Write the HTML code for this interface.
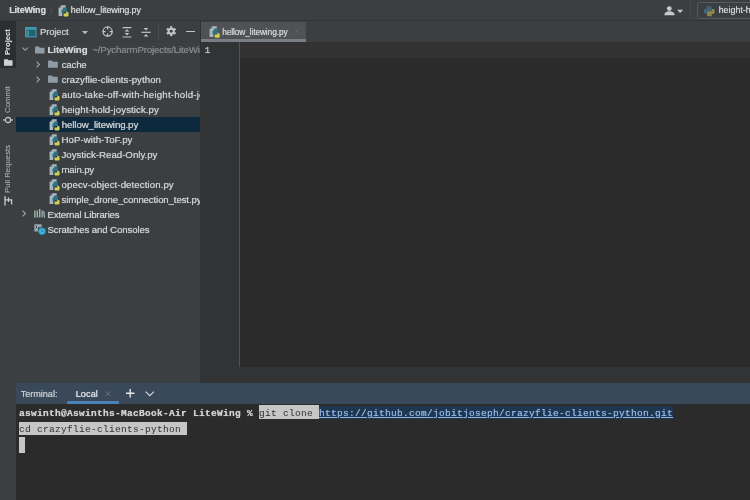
<!DOCTYPE html>
<html><head><meta charset="utf-8">
<style>
*{margin:0;padding:0;box-sizing:border-box}
html,body{width:750px;height:500px;overflow:hidden;background:#2b2b2b}
body{position:relative;font-family:"Liberation Sans",sans-serif;font-size:10px;color:#bbbbbb}
.abs{position:absolute}
.t{position:absolute;white-space:nowrap;line-height:14px;text-shadow:0 0 .7px currentColor}
svg{position:absolute;overflow:visible}
.t,.vt,svg{filter:blur(.35px)}
#nav{left:0;top:0;width:750px;height:20px;background:#3c3f41}
#navb{left:0;top:20px;width:750px;height:1px;background:#343739}
#strip{left:0;top:21px;width:16px;height:479px;background:#3c3f41}
#stripb{display:none}
#ptab{left:0;top:21px;width:16px;height:47px;background:#2c2e2f}
#proj{left:16px;top:21px;width:184px;height:362px;background:#3c3f41;overflow:hidden}
#projhb{left:0;top:20px;width:184px;height:1px;background:#393c3e}
#projb{left:200px;top:21px;width:1px;height:362px;background:#2f3133}
#sel{left:0;top:95.6px;width:184px;height:15.2px;background:#0d293e}
#tabs{left:201px;top:21px;width:549px;height:20.6px;background:#3c3f41}
#tab{left:201px;top:22px;width:104.6px;height:19.7px;background:#4e5254}
#tabu{left:201px;top:39.2px;width:104.6px;height:2.5px;background:#787e84}
#gut{left:201px;top:41.6px;width:38px;height:341.4px;background:#313335}
#gutl{left:238.5px;top:41.6px;width:1px;height:325px;background:#505355}
#ed{left:239px;top:41.6px;width:511px;height:324.9px;background:#2b2b2b}
#caret{left:239.5px;top:41.6px;width:510.5px;height:16.2px;background:#323232}
#edbot{left:201px;top:366.5px;width:549px;height:16.5px;background:#313335}
#th{left:16px;top:383px;width:734px;height:21px;background:#3a4959}
#tb{left:16px;top:404px;width:734px;height:96px;background:#2b2b2b}
.mono{font-family:"Liberation Mono",monospace;font-size:9.5px;letter-spacing:.3px;color:#cfcfcf;line-height:14px;white-space:pre}
.hl{background:#c6c6c6;color:#303030}
.vt{position:absolute;transform-origin:0 0;transform:rotate(-90deg);white-space:nowrap;font-size:7.8px;line-height:10px;height:10px}
</style></head><body>
<div id="nav" class="abs"></div><div id="navb" class="abs"></div>
<div id="strip" class="abs"></div><div id="stripb" class="abs"></div><div id="ptab" class="abs"></div>
<div id="tabs" class="abs"></div><div id="tab" class="abs"></div><div id="tabu" class="abs"></div>
<div id="gut" class="abs"></div><div id="ed" class="abs"></div><div id="caret" class="abs"></div><div id="gutl" class="abs"></div>
<div id="edbot" class="abs"></div>
<div id="th" class="abs"></div><div id="tb" class="abs"></div>


<!-- nav icons -->
<svg style="left:48.8px;top:6px" width="4" height="10" viewBox="0 0 4 10"><path d="M0.5 0.3L3 5L0.5 9.7" fill="none" stroke="#4d5053" stroke-width="1"/></svg>
<svg style="left:58px;top:5.2px" width="11" height="12" viewBox="0 0 11.5 12.5"><path d="M3.4 0.3H8V4.6H4.4V11.4H0.6V3.1Z" fill="#a9b7be"/> <path d="M0.6 3.1L3.4 0.3V3.1Z" fill="#3c3f41" fill-opacity=".4"/> <path d="M5.2 2.6H8.2Q9.2 2.6 9.2 3.6V6.4Q9.2 7.4 8.2 7.4H5.8V8.6H4.6Q3.6 8.6 3.6 7.6V5.6Q3.6 4.6 4.6 4.6H5.2Z" fill="#2b7384"/> <path d="M7.6 12H10Q11 12 11 11V8.4Q11 7.4 10 7.4H9.4V6.6H8.8V7.8Q8.8 8.8 7.8 8.8H5.8V11Q5.8 12 6.8 12Z" fill="#cdd15a"/></svg>
<!-- user icon -->
<svg style="left:664px;top:5.5px" width="20" height="10" viewBox="0 0 20 10">
 <circle cx="5.3" cy="2.6" r="2.4" fill="#c6c8ca"/>
 <path d="M0.4 9.2C0.4 6.4 2.5 5.3 5.3 5.3S10.6 6.4 10.6 9.2Z" fill="#c6c8ca"/>
 <path d="M13 3.8H19.2L16.1 7Z" fill="#c6c8ca"/>
</svg>
<div class="abs" style="left:689.5px;top:1px;width:1px;height:18px;background:#474a4c"></div>
<div class="abs" style="left:696.5px;top:2.2px;width:70px;height:16.6px;border:1px solid #575b5d;border-radius:2.5px"></div>
<svg style="left:704px;top:6px" width="10.5" height="10.5" viewBox="0 0 10 10">
 <path d="M2.6 0.2H6.2Q7.2 0.2 7.2 1.2V4.9H3.6Q2.6 4.9 2.6 5.9V7.2H1Q0 7.2 0 6.2V3.5Q0 2.5 1 2.5H2.6Z" fill="#3e647a"/>
 <path d="M7.4 9.8H3.8Q2.8 9.8 2.8 8.8V5.1H6.4Q7.4 5.1 7.4 4.1V2.8H9Q10 2.8 10 3.8V6.5Q10 7.5 9 7.5H7.4Z" fill="#8a8648"/>
</svg>

<!-- tool strip -->
<div class="vt" style="left:2.6px;top:55px;font-weight:bold;color:#e4e6e8;font-size:7.6px">Project</div>
<svg style="left:3.6px;top:58.8px" width="8.6" height="6.8" viewBox="0 0 10 8"><path d="M0 0.2H4.2L5.2 1.6H10V8H0Z" fill="#cfd1d3"/></svg>
<div class="vt" style="left:2.8px;top:112.6px;color:#b8babc">Commit</div>
<svg style="left:3px;top:116px" width="10" height="8" viewBox="0 0 10 8"><path d="M0 4H10" stroke="#c6c8ca" stroke-width="1.2"/><circle cx="5" cy="4" r="2.6" fill="#3c3f41" stroke="#c6c8ca" stroke-width="1.2"/></svg>
<div class="vt" style="left:2.8px;top:193.2px;color:#b8babc">Pull Requests</div>
<svg style="left:4px;top:196px" width="9" height="9.4" viewBox="0 0 9 9.4"><path d="M1 0V9.4M1 3.9H7.6V8.6M4.5 1.6V6" fill="none" stroke="#c8cacc" stroke-width="1.3"/></svg>

<!-- project panel -->
<div id="proj" class="abs">
 <div id="projhb" class="abs"></div>
 <div id="sel" class="abs"></div>
<div class="abs" style="left:1px;top:0;width:183px;height:362px">
 <!-- header icons (coords relative to panel: x-17, y-21) -->
 <svg style="left:8px;top:5.6px" width="11.6" height="10.4" viewBox="0 0 11.6 10.4">
  <rect x="0.6" y="0.6" width="10.4" height="9.2" fill="#27606f" stroke="#3d9ab0" stroke-width="1.2"/>
  <rect x="0.6" y="0.6" width="10.4" height="2.2" fill="#3d9ab0"/>
  <rect x="1.4" y="3.4" width="2.6" height="5.8" fill="#3d8da2"/>
 </svg>
 <svg style="left:65px;top:10px" width="6" height="3.2" viewBox="0 0 6 3.2"><path d="M0 0H6L3 3.2Z" fill="#b8babc"/></svg>
 <svg style="left:84.6px;top:5.4px" width="11.2" height="11.2" viewBox="0 0 11.2 11.2"><circle cx="5.6" cy="5.6" r="4.6" fill="none" stroke="#c2c4c6" stroke-width="1.25"/><path d="M5.6 0.6V3.6M5.6 7.6V10.6M0.6 5.6H3.6M7.6 5.6H10.6" stroke="#c2c4c6" stroke-width="1.25"/></svg>
 <svg style="left:105px;top:5.6px" width="10" height="10.6" viewBox="0 0 10 10.6"><path d="M0.6 0.6H9.4M0.6 10H9.4" stroke="#c2c4c6" stroke-width="1.2"/><path d="M5 2.2L7.4 4.6H2.6ZM5 8.4L7.4 6H2.6Z" fill="#c2c4c6"/></svg>
 <svg style="left:124.4px;top:5.6px" width="10" height="10.6" viewBox="0 0 10 10.6"><path d="M0.4 5.3H9.6" stroke="#c2c4c6" stroke-width="1.2"/><path d="M5 3.6L7.4 1.0H2.6ZM5 7L7.4 9.6H2.6Z" fill="#c2c4c6"/></svg>
 <div class="abs" style="left:141.4px;top:4px;width:1px;height:13.5px;background:#4d5052"></div>
 <svg style="left:149px;top:5.4px" width="10.4" height="10.4" viewBox="-5.2 -5.2 10.4 10.4">
  <g fill="#c2c4c6"><circle r="3.5"/>
  <rect x="-1.1" y="-5" width="2.2" height="10"/>
  <rect x="-1.1" y="-5" width="2.2" height="10" transform="rotate(60)"/>
  <rect x="-1.1" y="-5" width="2.2" height="10" transform="rotate(120)"/></g>
  <circle r="1.5" fill="#3c3f41"/>
 </svg>
 <div class="abs" style="left:169.2px;top:9.6px;width:9.2px;height:1.5px;background:#c2c4c6"></div>
 <!-- tree icons -->
 <svg style="left:4.6px;top:26.4px" width="6.4" height="4" viewBox="0 0 6.4 4"><path d="M0.5 0.6L3.2 3.3L5.9 0.6" fill="none" stroke="#a4a7a9" stroke-width="1.1"/></svg>
 <svg style="left:18px;top:24.6px" width="9.6" height="7.6" viewBox="0 0 10 8"><path d="M0 0.4H4L5 1.8H10V8H0Z" fill="#8f9ca6"/></svg>
 <svg style="left:18.8px;top:39.7px" width="4" height="7" viewBox="0 0 4 7"><path d="M0.6 0.6L3.4 3.5L0.6 6.4" fill="none" stroke="#a4a7a9" stroke-width="1.1"/></svg>
 <svg style="left:31.2px;top:39.3px" width="9.8" height="7.8" viewBox="0 0 10 8"><path d="M0 0.4H4L5 1.8H10V8H0Z" fill="#8f9ca6"/></svg>
 <svg style="left:18.8px;top:54.6px" width="4" height="7" viewBox="0 0 4 7"><path d="M0.6 0.6L3.4 3.5L0.6 6.4" fill="none" stroke="#a4a7a9" stroke-width="1.1"/></svg>
 <svg style="left:31.2px;top:54.2px" width="9.8" height="7.8" viewBox="0 0 10 8"><path d="M0 0.4H4L5 1.8H10V8H0Z" fill="#8f9ca6"/></svg>
 <svg style="left:31.8px;top:67.8px" width="11" height="12" viewBox="0 0 11.5 12.5"><path d="M3.4 0.3H8V4.6H4.4V11.4H0.6V3.1Z" fill="#a9b7be"/> <path d="M0.6 3.1L3.4 0.3V3.1Z" fill="#3c3f41" fill-opacity=".4"/> <path d="M5.2 2.6H8.2Q9.2 2.6 9.2 3.6V6.4Q9.2 7.4 8.2 7.4H5.8V8.6H4.6Q3.6 8.6 3.6 7.6V5.6Q3.6 4.6 4.6 4.6H5.2Z" fill="#2b7384"/> <path d="M7.6 12H10Q11 12 11 11V8.4Q11 7.4 10 7.4H9.4V6.6H8.8V7.8Q8.8 8.8 7.8 8.8H5.8V11Q5.8 12 6.8 12Z" fill="#cdd15a"/></svg>
 <svg style="left:31.8px;top:82.75px" width="11" height="12" viewBox="0 0 11.5 12.5"><path d="M3.4 0.3H8V4.6H4.4V11.4H0.6V3.1Z" fill="#a9b7be"/> <path d="M0.6 3.1L3.4 0.3V3.1Z" fill="#3c3f41" fill-opacity=".4"/> <path d="M5.2 2.6H8.2Q9.2 2.6 9.2 3.6V6.4Q9.2 7.4 8.2 7.4H5.8V8.6H4.6Q3.6 8.6 3.6 7.6V5.6Q3.6 4.6 4.6 4.6H5.2Z" fill="#2b7384"/> <path d="M7.6 12H10Q11 12 11 11V8.4Q11 7.4 10 7.4H9.4V6.6H8.8V7.8Q8.8 8.8 7.8 8.8H5.8V11Q5.8 12 6.8 12Z" fill="#cdd15a"/></svg>
 <svg style="left:31.8px;top:97.7px" width="11" height="12" viewBox="0 0 11.5 12.5"><path d="M3.4 0.3H8V4.6H4.4V11.4H0.6V3.1Z" fill="#a9b7be"/> <path d="M0.6 3.1L3.4 0.3V3.1Z" fill="#3c3f41" fill-opacity=".4"/> <path d="M5.2 2.6H8.2Q9.2 2.6 9.2 3.6V6.4Q9.2 7.4 8.2 7.4H5.8V8.6H4.6Q3.6 8.6 3.6 7.6V5.6Q3.6 4.6 4.6 4.6H5.2Z" fill="#2b7384"/> <path d="M7.6 12H10Q11 12 11 11V8.4Q11 7.4 10 7.4H9.4V6.6H8.8V7.8Q8.8 8.8 7.8 8.8H5.8V11Q5.8 12 6.8 12Z" fill="#cdd15a"/></svg>
 <svg style="left:31.8px;top:112.65px" width="11" height="12" viewBox="0 0 11.5 12.5"><path d="M3.4 0.3H8V4.6H4.4V11.4H0.6V3.1Z" fill="#a9b7be"/> <path d="M0.6 3.1L3.4 0.3V3.1Z" fill="#3c3f41" fill-opacity=".4"/> <path d="M5.2 2.6H8.2Q9.2 2.6 9.2 3.6V6.4Q9.2 7.4 8.2 7.4H5.8V8.6H4.6Q3.6 8.6 3.6 7.6V5.6Q3.6 4.6 4.6 4.6H5.2Z" fill="#2b7384"/> <path d="M7.6 12H10Q11 12 11 11V8.4Q11 7.4 10 7.4H9.4V6.6H8.8V7.8Q8.8 8.8 7.8 8.8H5.8V11Q5.8 12 6.8 12Z" fill="#cdd15a"/></svg>
 <svg style="left:31.8px;top:127.6px" width="11" height="12" viewBox="0 0 11.5 12.5"><path d="M3.4 0.3H8V4.6H4.4V11.4H0.6V3.1Z" fill="#a9b7be"/> <path d="M0.6 3.1L3.4 0.3V3.1Z" fill="#3c3f41" fill-opacity=".4"/> <path d="M5.2 2.6H8.2Q9.2 2.6 9.2 3.6V6.4Q9.2 7.4 8.2 7.4H5.8V8.6H4.6Q3.6 8.6 3.6 7.6V5.6Q3.6 4.6 4.6 4.6H5.2Z" fill="#2b7384"/> <path d="M7.6 12H10Q11 12 11 11V8.4Q11 7.4 10 7.4H9.4V6.6H8.8V7.8Q8.8 8.8 7.8 8.8H5.8V11Q5.8 12 6.8 12Z" fill="#cdd15a"/></svg>
 <svg style="left:31.8px;top:142.55px" width="11" height="12" viewBox="0 0 11.5 12.5"><path d="M3.4 0.3H8V4.6H4.4V11.4H0.6V3.1Z" fill="#a9b7be"/> <path d="M0.6 3.1L3.4 0.3V3.1Z" fill="#3c3f41" fill-opacity=".4"/> <path d="M5.2 2.6H8.2Q9.2 2.6 9.2 3.6V6.4Q9.2 7.4 8.2 7.4H5.8V8.6H4.6Q3.6 8.6 3.6 7.6V5.6Q3.6 4.6 4.6 4.6H5.2Z" fill="#2b7384"/> <path d="M7.6 12H10Q11 12 11 11V8.4Q11 7.4 10 7.4H9.4V6.6H8.8V7.8Q8.8 8.8 7.8 8.8H5.8V11Q5.8 12 6.8 12Z" fill="#cdd15a"/></svg>
 <svg style="left:31.8px;top:157.5px" width="11" height="12" viewBox="0 0 11.5 12.5"><path d="M3.4 0.3H8V4.6H4.4V11.4H0.6V3.1Z" fill="#a9b7be"/> <path d="M0.6 3.1L3.4 0.3V3.1Z" fill="#3c3f41" fill-opacity=".4"/> <path d="M5.2 2.6H8.2Q9.2 2.6 9.2 3.6V6.4Q9.2 7.4 8.2 7.4H5.8V8.6H4.6Q3.6 8.6 3.6 7.6V5.6Q3.6 4.6 4.6 4.6H5.2Z" fill="#2b7384"/> <path d="M7.6 12H10Q11 12 11 11V8.4Q11 7.4 10 7.4H9.4V6.6H8.8V7.8Q8.8 8.8 7.8 8.8H5.8V11Q5.8 12 6.8 12Z" fill="#cdd15a"/></svg>
 <svg style="left:31.8px;top:172.45px" width="11" height="12" viewBox="0 0 11.5 12.5"><path d="M3.4 0.3H8V4.6H4.4V11.4H0.6V3.1Z" fill="#a9b7be"/> <path d="M0.6 3.1L3.4 0.3V3.1Z" fill="#3c3f41" fill-opacity=".4"/> <path d="M5.2 2.6H8.2Q9.2 2.6 9.2 3.6V6.4Q9.2 7.4 8.2 7.4H5.8V8.6H4.6Q3.6 8.6 3.6 7.6V5.6Q3.6 4.6 4.6 4.6H5.2Z" fill="#2b7384"/> <path d="M7.6 12H10Q11 12 11 11V8.4Q11 7.4 10 7.4H9.4V6.6H8.8V7.8Q8.8 8.8 7.8 8.8H5.8V11Q5.8 12 6.8 12Z" fill="#cdd15a"/></svg>
 <svg style="left:5.4px;top:189.4px" width="4" height="7" viewBox="0 0 4 7"><path d="M0.6 0.6L3.4 3.5L0.6 6.4" fill="none" stroke="#a4a7a9" stroke-width="1.1"/></svg>
 <svg style="left:17px;top:188px" width="11.2" height="8.6" viewBox="0 0 11.2 8.6"><path d="M0.9 1.6V8.6M3.3 1.6V8.6M5.7 0.1V8.6" stroke="#94bda9" stroke-width="1.4" fill="none"/><path d="M8.1 1.6V8.6M9.7 2L10.5 8.6" stroke="#9aabb5" stroke-width="1.35" fill="none"/></svg>
 <svg style="left:17.2px;top:203px" width="12.4" height="11.4" viewBox="0 0 12.4 11.4">
  <path d="M0.3 0.3H7.6V3.2H4V7.4H0.3Z" fill="#9aa7b0"/>
  <path d="M1.6 1.6L3 3L1.6 4.4" stroke="#3c3f41" stroke-width=".9" fill="none"/>
  <circle cx="8" cy="7.3" r="3.5" fill="#43b4e0" stroke="#22809f" stroke-width="1"/>
  <path d="M8 5.6V7.5H9.3" stroke="#22708c" stroke-width=".9" fill="none"/>
 </svg>
<div class="t" style="left:30.5px;top:22.4px;font-size:9.7px;font-weight:bold;letter-spacing:-0.102px;color:#d0d2d4;">LiteWing</div>
<div class="t" style="left:75.3px;top:22.4px;font-size:9.7px;letter-spacing:-0.157px;color:#84878a;">~/PycharmProjects/LiteWing</div>
<div class="t" style="left:44.7px;top:37.3px;font-size:9.7px;letter-spacing:-0.212px;color:#cccfd1;">cache</div>
<div class="t" style="left:44.7px;top:52.2px;font-size:9.7px;letter-spacing:0.032px;color:#cccfd1;">crazyflie-clients-python</div>
<div class="t" style="left:44.7px;top:67.2px;font-size:9.7px;letter-spacing:0.193px;color:#cccfd1;">auto-take-off-with-height-hold-joystick.py</div>
<div class="t" style="left:44.7px;top:82.2px;font-size:9.7px;letter-spacing:0.063px;color:#cccfd1;">height-hold-joystick.py</div>
<div class="t" style="left:44.7px;top:97.1px;font-size:9.7px;letter-spacing:-0.089px;color:#cccfd1;">hellow_litewing.py</div>
<div class="t" style="left:44.5px;top:112.0px;font-size:9.7px;letter-spacing:0.031px;color:#cccfd1;">HoP-with-ToF.py</div>
<div class="t" style="left:44.5px;top:127.0px;font-size:9.7px;letter-spacing:-0.014px;color:#cccfd1;">Joystick-Read-Only.py</div>
<div class="t" style="left:44.5px;top:141.9px;font-size:9.7px;letter-spacing:-0.203px;color:#cccfd1;">main.py</div>
<div class="t" style="left:44.5px;top:156.9px;font-size:9.7px;letter-spacing:0.076px;color:#cccfd1;">opecv-object-detection.py</div>
<div class="t" style="left:44.5px;top:171.8px;font-size:9.7px;letter-spacing:-0.143px;color:#cccfd1;">simple_drone_connection_test.py</div>
<div class="t" style="left:30.4px;top:186.8px;font-size:9.7px;letter-spacing:-0.183px;color:#cccfd1;">External Libraries</div>
<div class="t" style="left:30.4px;top:201.8px;font-size:9.7px;letter-spacing:-0.137px;color:#cccfd1;">Scratches and Consoles</div>
</div></div>
<div id="projb" class="abs"></div>

<!-- editor tab -->
<svg style="left:208.6px;top:26.2px" width="11.2" height="12.2" viewBox="0 0 11.5 12.5"><path d="M3.4 0.3H8V4.6H4.4V11.4H0.6V3.1Z" fill="#a9b7be"/> <path d="M0.6 3.1L3.4 0.3V3.1Z" fill="#3c3f41" fill-opacity=".4"/> <path d="M5.2 2.6H8.2Q9.2 2.6 9.2 3.6V6.4Q9.2 7.4 8.2 7.4H5.8V8.6H4.6Q3.6 8.6 3.6 7.6V5.6Q3.6 4.6 4.6 4.6H5.2Z" fill="#2b7384"/> <path d="M7.6 12H10Q11 12 11 11V8.4Q11 7.4 10 7.4H9.4V6.6H8.8V7.8Q8.8 8.8 7.8 8.8H5.8V11Q5.8 12 6.8 12Z" fill="#cdd15a"/></svg>
<svg style="left:294px;top:28.4px" width="5.8" height="5.8" viewBox="0 0 6 6"><path d="M0.4 0.4L5.6 5.6M5.6 0.4L0.4 5.6" stroke="#606467" stroke-width=".9"/></svg>
<div class="t" style="left:204.8px;top:43.7px;font-family:'Liberation Mono',monospace;font-size:9px;color:#c2c4c6">1</div>

<!-- terminal header -->
<svg style="left:105.2px;top:391px" width="5.6" height="5.6" viewBox="0 0 6 6"><path d="M0.4 0.4L5.6 5.6M5.6 0.4L0.4 5.6" stroke="#67788a" stroke-width="1"/></svg>
<div class="abs" style="left:67.2px;top:401.2px;width:52px;height:3px;background:#4882b8;border-radius:1px"></div>
<svg style="left:126.4px;top:389.4px" width="8.4" height="8.4" viewBox="0 0 8.4 8.4"><path d="M4.2 0V8.4M0 4.2H8.4" stroke="#e4e6e8" stroke-width="1.4"/></svg>
<svg style="left:145.4px;top:391.4px" width="9.6" height="5.4" viewBox="0 0 9.6 5.4"><path d="M0.6 0.6L4.8 4.6L9 0.6" fill="none" stroke="#d0d4d8" stroke-width="1.2"/></svg>

<!-- terminal body -->
<div class="abs hl" style="left:258.6px;top:405px;width:60px;height:14px"></div>
<div class="abs" style="left:318.6px;top:406px;width:354px;height:12.6px;background:#1f364f"></div>
<div class="abs hl" style="left:18.6px;top:421.6px;width:168.6px;height:13.8px"></div>
<div class="abs hl" style="left:18.6px;top:437.3px;width:6.4px;height:16px"></div>
<div class="t mono" style="left:19px;top:406.9px"><b>aswinth@Aswinths-MacBook-Air LiteWing % </b><span style="color:#303030;text-shadow:none">git clone </span><span style="color:#8db3e2;text-decoration:underline">https://github.com/jobitjoseph/crazyflie-clients-python.git</span></div>
<div class="t mono" style="left:19px;top:422.5px;color:#303030;text-shadow:none">cd crazyflie-clients-python </div>
<div class="t" style="left:9.2px;top:2.9px;font-size:9px;font-weight:bold;letter-spacing:-0.165px;color:#d2d4d6;">LiteWing</div>
<div class="t" style="left:70.8px;top:2.9px;font-size:9px;letter-spacing:-0.141px;color:#d2d4d6;">hellow_litewing.py</div>
<div class="t" style="left:718.7px;top:3.0px;font-size:8.9px;color:#d2d4d6;">height-hold</div>
<div class="t" style="left:40.0px;top:25.0px;font-size:9.3px;letter-spacing:-0.048px;color:#c9cbcd;">Project</div>
<div class="t" style="left:222.2px;top:24.5px;font-size:8.4px;letter-spacing:-0.123px;color:#d0d2d4;">hellow_litewing.py</div>
<div class="t" style="left:20.7px;top:386.5px;font-size:9.2px;letter-spacing:-0.065px;color:#c2c8ce;">Terminal:</div>
<div class="t" style="left:75.7px;top:386.5px;font-size:9.2px;letter-spacing:0.046px;color:#dde1e5;">Local</div>
</body></html>
